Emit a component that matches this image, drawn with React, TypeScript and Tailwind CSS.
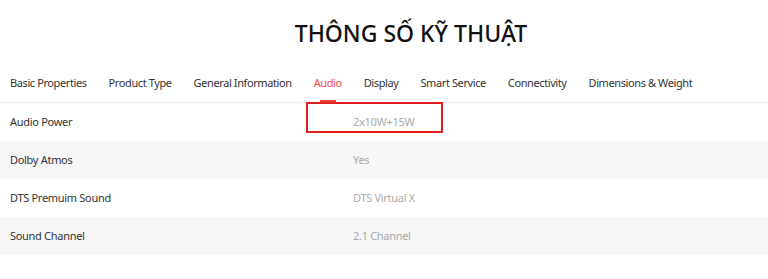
import React from "react";

const tabs = [
  "Basic Properties",
  "Product Type",
  "General Information",
  "Audio",
  "Display",
  "Smart Service",
  "Connectivity",
  "Dimensions & Weight",
];

const specs = [
  { label: "Audio Power", value: "2x10W+15W" },
  { label: "Dolby Atmos", value: "Yes" },
  { label: "DTS Premuim Sound", value: "DTS Virtual X" },
  { label: "Sound Channel", value: "2.1 Channel" },
];

export default function App() {
  const active = "Audio";

  return (
    <div
      className="relative w-[768px] h-[279px] bg-white text-[#333]"
      style={{ fontFamily: '"Noto Sans", "Open Sans", sans-serif' }}
    >
      <h2 className="pt-[18px] pl-[54px] text-center text-[23px] leading-[30px] font-medium text-[#111]">
        THÔNG SỐ KỸ THUẬT
      </h2>

      <div className="mt-[20px] flex gap-[22px] px-[10px] border-b border-[#eeeeee]">
        {tabs.map((tab) => {
          const isActive = tab === active;
          return (
            <div
              key={tab}
              className={`relative h-[34px] pt-[7px] text-[11px] leading-[16px] tracking-[-0.4px] ${
                isActive ? "text-[#f04a4a]" : "text-[#333]"
              }`}
            >
              {tab}
              {isActive && (
                <span className="absolute bottom-[-1px] left-1/2 -translate-x-1/2 w-[16px] h-[3px] bg-[#e8433f]" />
              )}
            </div>
          );
        })}
      </div>

      <div>
        {specs.map((row, i) => (
          <div
            key={row.label}
            className={`flex items-center h-[38px] text-[11px] tracking-[-0.3px] ${
              i % 2 === 1 ? "bg-[#f7f7f7]" : "bg-white"
            }`}
          >
            <div className="w-[353px] pl-[10px] text-[#333]">{row.label}</div>
            <div className="text-[#aaaaaa]">{row.value}</div>
          </div>
        ))}
      </div>

      {/* highlight annotation */}
      <div className="absolute left-[306px] top-[102px] w-[137px] h-[31px] border-2 border-[#dd1f1f]" />
    </div>
  );
}
